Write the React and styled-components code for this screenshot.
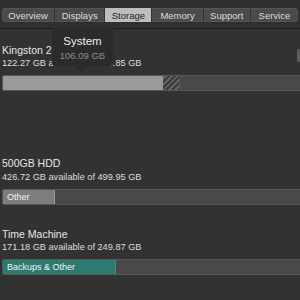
import React from 'react'
import styled, { createGlobalStyle } from 'styled-components'

const GlobalStyle = createGlobalStyle`
  html, body {
    margin: 0;
    padding: 0;
    background: #323232;
  }
  body {
    font-family: "Liberation Sans", Arial, sans-serif;
    -webkit-font-smoothing: antialiased;
  }
`

const Window = styled.div`
  position: relative;
  width: 300px;
  height: 300px;
  overflow: hidden;
  background: #323232;
  color: #e4e4e4;
`

const Header = styled.div`
  height: 29px;
  box-sizing: border-box;
  padding-top: 8px;
  padding-left: 2px;
  background: #2f2f2f;
  border-bottom: 1px solid #1f1f1f;
`

const TabBar = styled.div`
  display: flex;
  width: 296px;
  height: 14px;
  border-radius: 4px;
  overflow: hidden;
  background: #4b4b4b;
  box-shadow: inset 0 0 0 1px #555;
`

const Tab = styled.div`
  width: ${p => p.w}px;
  display: flex;
  align-items: center;
  justify-content: center;
  font-size: 9.5px;
  color: ${p => (p.active ? '#1e1e1e' : '#dcdcdc')};
  background: ${p => (p.active ? '#bdbdbd' : 'transparent')};
  border-left: ${p => (p.first ? 'none' : '1px solid #333')};
`

const Content = styled.div`
  padding: 15px 0 0 2px;
`

const Volume = styled.div`
  margin-bottom: ${p => p.gap}px;
`

const Title = styled.div`
  font-size: 10.5px;
  line-height: 12px;
  color: #e6e6e6;
`

const Sub = styled.div`
  margin-top: ${p => p.top || 1}px;
  font-size: 9.2px;
  line-height: 13px;
  color: #dedede;
`

const Bar = styled.div`
  display: flex;
  margin-top: 5px;
  width: 320px;
  height: 16px;
  box-sizing: border-box;
  border: 1px solid #575757;
  border-radius: 2px;
  background: #494949;
  overflow: hidden;
`

const Segment = styled.div`
  display: flex;
  align-items: center;
  padding-left: 4px;
  box-sizing: border-box;
  font-size: 9px;
  color: #f2f2f2;
  background: ${p => p.color};
  border-right: 1px solid ${p => p.edge || 'transparent'};
`

const Hatch = styled.div`
  background: repeating-linear-gradient(
    -45deg,
    #3c3c3c 0 2px,
    #626262 2px 4px
  );
  border-right: 1px solid #555;
`

const Tooltip = styled.div`
  position: absolute;
  left: 52px;
  top: 28px;
  width: 61px;
  height: 38px;
  box-sizing: border-box;
  padding-top: 7px;
  background: #2b2b2b;
  border-radius: 3px;
  text-align: center;

  &::after {
    content: '';
    position: absolute;
    left: 23px;
    bottom: -7px;
    border-left: 7px solid transparent;
    border-right: 7px solid transparent;
    border-top: 7px solid #2b2b2b;
  }
`

const TipTitle = styled.div`
  font-size: 11.5px;
  line-height: 13px;
  color: #ececec;
`

const TipValue = styled.div`
  margin-top: 1px;
  font-size: 9.5px;
  line-height: 13px;
  color: #8c8c8c;
`

const Thumb = styled.div`
  position: absolute;
  right: 0;
  top: 49px;
  width: 3px;
  height: 13px;
  border-radius: 2px 0 0 2px;
  background: #5e5e5e;
`

const tabs = [
  ['Overview', 53],
  ['Displays', 50],
  ['Storage', 47],
  ['Memory', 51],
  ['Support', 47],
  ['Service', 48],
]

export default function App() {
  return (
    <Window>
      <GlobalStyle />
      <Header>
        <TabBar>
          {tabs.map(([name, w], i) => (
            <Tab key={name} w={w} first={i === 0} active={name === 'Storage'}>
              {name}
            </Tab>
          ))}
        </TabBar>
      </Header>
      <Content>
        <Volume gap={66}>
          <Title>Kingston 2</Title>
          <Sub>122.27 GB available of 228.85 GB</Sub>
          <Bar>
            <Segment color="#9a9a9a" style={{ width: 160 }} />
            <Hatch style={{ width: 16 }} />
          </Bar>
        </Volume>
        <Volume gap={23}>
          <Title>500GB HDD</Title>
          <Sub top={2}>426.72 GB available of 499.95 GB</Sub>
          <Bar>
            <Segment color="#7d7d7d" edge="#9a9a9a" style={{ width: 52 }}>
              Other
            </Segment>
          </Bar>
        </Volume>
        <Volume gap={0}>
          <Title>Time Machine</Title>
          <Sub>171.18 GB available of 249.87 GB</Sub>
          <Bar>
            <Segment color="#2d7a70" edge="#3d8f84" style={{ width: 113 }}>
              Backups &amp; Other
            </Segment>
          </Bar>
        </Volume>
      </Content>
      <Tooltip>
        <TipTitle>System</TipTitle>
        <TipValue>106.09 GB</TipValue>
      </Tooltip>
      <Thumb />
    </Window>
  )
}
